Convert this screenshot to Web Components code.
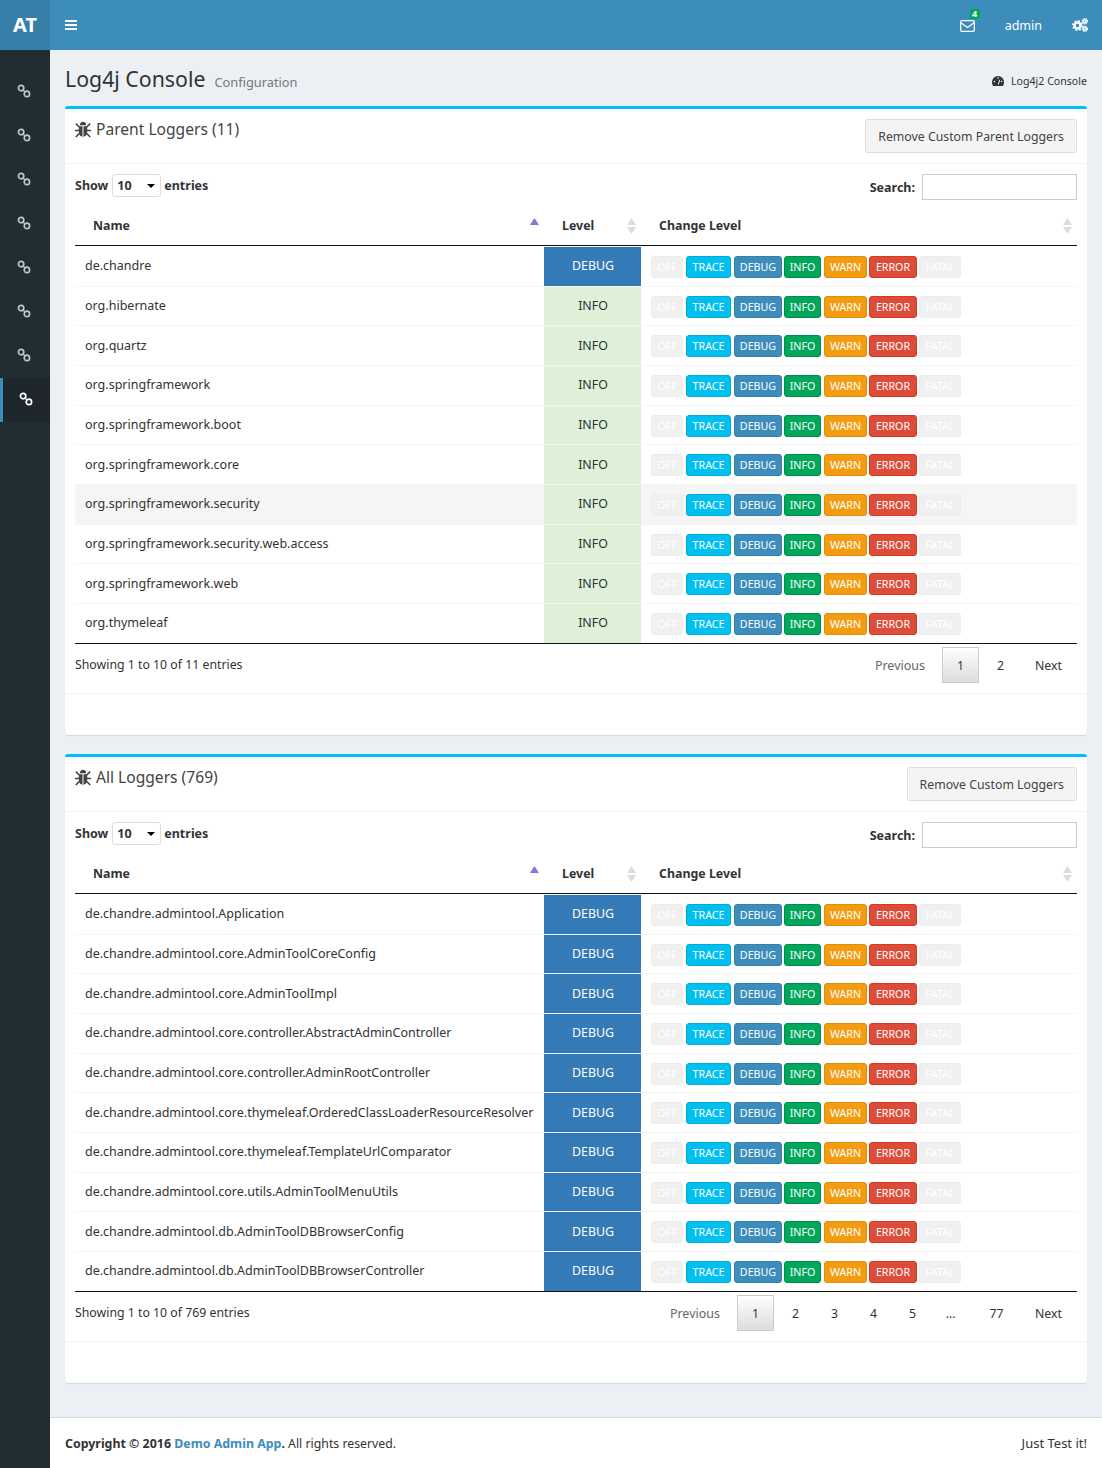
<!DOCTYPE html>
<html>
<head>
<meta charset="utf-8">
<title>Log4j Console</title>
<style>
  html, body { margin: 0; padding: 0; background: #ecf0f5; }
  body { font-family: "Noto Sans", "Liberation Sans", sans-serif; font-size: 12.3px; color: #333; }
</style>
</head>
<body>
<admin-layout>
  <log-box title-text="Parent Loggers (11)" action="Remove Custom Parent Loggers" info="Showing 1 to 10 of 11 entries" pages="1,2" source="parent"></log-box>
  <log-box title-text="All Loggers (769)" action="Remove Custom Loggers" info="Showing 1 to 10 of 769 entries" pages="1,2,3,4,5,…,77" source="all"></log-box>
</admin-layout>

<script>
// iconos compartidos
const ICONS = {
  link: '<svg width="14" height="14" viewBox="0 0 14 14" fill="none" stroke="currentColor" stroke-width="1.700"><circle cx="4.100" cy="4.100" r="2.700"/><circle cx="9.900" cy="9.900" r="2.700"/><path d="M5.500 5.500l3 3" stroke-width="1.200"/></svg>',
  bug: '<svg width="16" height="17" viewBox="0 0 16 17" fill="currentColor"><path d="M4.800 4.300C4.800 2 6.200.8 8 .8s3.200 1.200 3.200 3.500z"/><path d="M3.800 5.200h3.700v10.600C5.200 15.600 3.800 13.600 3.800 11zM8.500 5.200h3.700V11c0 2.600-1.400 4.600-3.700 4.800z"/><path d="M.8 2.600l3.400 3.400M15.200 2.600L11.800 6M0 9.500h4M16 9.500h-4M.8 16l3.400-3.400M15.200 16l-3.400-3.400" stroke="currentColor" stroke-width="1.500" fill="none"/></svg>',
  bars: '<svg width="12" height="10" viewBox="0 0 12 10" fill="currentColor"><rect width="12" height="2"/><rect y="4" width="12" height="2"/><rect y="8" width="12" height="2"/></svg>',
  mail: '<svg width="15" height="12" viewBox="0 0 15 12" fill="none" stroke="currentColor" stroke-width="1.300"><rect x=".7" y=".7" width="13.600" height="10.600" rx="1"/><path d="M1 2.800l6.500 4.700L14 2.800"/></svg>',
  gears: '<svg width="16" height="14" viewBox="0 0 16 14"><g fill="none" stroke="currentColor"><circle cx="5.500" cy="7.500" r="3" stroke-width="2.400"/><circle cx="5.500" cy="7.500" r="4.700" stroke-width="1.600" stroke-dasharray="1.800 1.900"/><circle cx="12.800" cy="3.200" r="1.500" stroke-width="1.500"/><circle cx="12.800" cy="3.200" r="2.700" stroke-width="1.200" stroke-dasharray="1.200 1.000"/><circle cx="12.800" cy="10.800" r="1.500" stroke-width="1.500"/><circle cx="12.800" cy="10.800" r="2.700" stroke-width="1.200" stroke-dasharray="1.200 1.000"/></g></svg>',
  gauge: '<svg width="12" height="10" viewBox="0 0 12 10" fill="currentColor"><path d="M6 0a6 6 0 0 1 6 6c0 1.600-.4 3-1.200 4H1.200C.4 9 0 7.600 0 6a6 6 0 0 1 6-6z"/><circle cx="6" cy="2" r=".8" fill="#ecf0f5"/><circle cx="2.400" cy="5.500" r=".8" fill="#ecf0f5"/><circle cx="9.600" cy="5.500" r=".8" fill="#ecf0f5"/><path d="M6.300 8.500L7.800 3.800" stroke="#ecf0f5" stroke-width="1"/></svg>'
};

// Botones de cambio de nivel
class LevelButtons extends HTMLElement {
  constructor() {
    super();
    this.attachShadow({ mode: 'open' });
    // nombre, fondo, borde, ancho, separación izquierda
    const levels = [
      ['OFF', '#f0f0f0', '#ececec', 32, 0], ['TRACE', '#00c0ef', '#00acd6', 45, 3], ['DEBUG', '#3c8dbc', '#367fa9', 48, 3],
      ['INFO', '#00a65a', '#008d4c', 37, 2], ['WARN', '#f39c12', '#e08e0b', 43, 3], ['ERROR', '#dd4b39', '#d73925', 48, 2], ['FATAL', '#f0f0f0', '#ececec', 42, 2]
    ];
    this.shadowRoot.innerHTML = `
      <style>
        :host { display: flex; }
        span { box-sizing: border-box; height: 22px; border: 1px solid; border-radius: 3px; color: #fff; font-size: 10.700px; line-height: 20px; text-align: center; }
      </style>
      ${levels.map(l => `<span style="width:${l[3]}px;margin-left:${l[4]}px;background:${l[1]};border-color:${l[2]}">${l[0]}</span>`).join('')}
    `;
  }
}

// Fila de la tabla de loggers
class LoggerRow extends HTMLElement {
  constructor() {
    super();
    this.attachShadow({ mode: 'open' });
    const level = this.getAttribute('level');
    this.shadowRoot.innerHTML = `
      <style>
        :host { display: grid; grid-template-columns: 469px 97px 1fr; height: 39.67px; box-sizing: border-box; border-top: 1px solid #f4f4f4; background: #fff; }
        :host(:first-child) { border-top-color: #fff; }
        :host([hover]) { background: #f5f5f5; }
        div { display: flex; align-items: center; padding-bottom: 1px; }
        .name { padding-left: 10px; white-space: nowrap; font-size: 12.520px; }
        .level { justify-content: center; padding-left: 1px; font-size: 12.400px; background: ${level === 'DEBUG' ? '#337ab7' : '#dff0d8'}; color: ${level === 'DEBUG' ? '#fff' : '#333'}; }
        .change { padding: 1.500px 0 0 10px; }
      </style>
      <div class="name"><slot></slot></div>
      <div class="level">${level}</div>
      <div class="change"><level-buttons></level-buttons></div>
    `;
  }
}

// Caja con tabla, cabecera y paginación
class LogBox extends HTMLElement {
  constructor() {
    super();
    this.attachShadow({ mode: 'open' });
  }
  connectedCallback() {
    const data = LOGGERS[this.getAttribute('source')];
    const pages = this.getAttribute('pages').split(',');
    const sort = (c1, c2) => `<svg width="9" height="16" viewBox="0 0 9 16"><path d="M4.500 0L9 7H0z" fill="${c1}"/><path d="M4.500 16L0 9h9z" fill="${c2}"/></svg>`;
    const pageClass = (p, i) => i === 0 ? 'cur' : p === '…' ? 'dots' : p.length > 1 ? 'wide' : '';
    this.shadowRoot.innerHTML = `
      <style>
        :host { display: block; height: 629px; box-sizing: border-box; background: #fff; border-top: 3px solid #00c0ef; border-radius: 3px; box-shadow: 0 1px 1px rgba(0,0,0,.1); margin-bottom: 19px; }
        .head { display: flex; justify-content: space-between; height: 55px; box-sizing: border-box; padding: 10px; border-bottom: 1px solid #f4f4f4; }
        h3 { margin: 0; font-size: 15.600px; font-weight: 400; line-height: 20px; color: #444; display: flex; gap: 5px; align-items: center; height: 20px; }
        button { font: inherit; color: #444; background: #f4f4f4; border: 1px solid #ddd; border-radius: 3px; height: 34px; padding: 0 12px; margin: 0; }
        .body { padding: 10px; }
        .controls { display: flex; justify-content: space-between; align-items: flex-start; height: 26px; font-weight: 700; font-size: 12.500px; }
        .len { display: flex; align-items: center; gap: 3px; height: 23px; }
        .select { box-sizing: border-box; width: 49px; height: 23px; margin-left: 1px; border: 1px solid #ddd; border-radius: 3px; display: flex; align-items: center; justify-content: space-between; padding: 0 5px 0 4px; }
        .select i { border: 4px solid transparent; border-top-color: #000; border-bottom: 0; }
        .search { display: flex; align-items: center; gap: 7px; }
        .search b { display: block; width: 155px; height: 26px; box-sizing: border-box; border: 1px solid #ccc; }
        .thead { display: grid; grid-template-columns: 469px 97px 1fr; height: 39px; margin-top: 6px; border-bottom: 1px solid #111; box-sizing: content-box; font-weight: 700; font-size: 12.400px; }
        .thead div { display: flex; align-items: center; justify-content: space-between; padding: 0 5px 0 18px; position: relative; }
        .rows { border-bottom: 1px solid #111; }
        .foot { display: flex; justify-content: space-between; align-items: flex-start; padding-top: 3px; height: 49px; box-sizing: border-box; }
        .info { padding-top: 9px; }
        .pager { display: flex; padding-top: 0; }
        .pager span { box-sizing: border-box; height: 36px; line-height: 36px; text-align: center; width: 39px; border: 1px solid transparent; }
        .pager .wide { width: 47px; }
        .pager .dots { width: 41px; padding-right: 4px; }
        .pager .off { color: #666; width: auto; padding: 0 16px 0 0; font-size: 12.500px; }
        .pager .cur { width: 37px; margin-right: 2px; background: linear-gradient(#fff, #dcdcdc); border-color: #ccc; }
        .pager .next { width: auto; padding: 0 14px; }
        .sep { border-top: 1px solid #f4f4f4; margin: 0 -10px; }
      </style>
      <div class="head">
        <h3>${ICONS.bug}<span>${this.getAttribute('title-text')}</span></h3>
        <button>${this.getAttribute('action')}</button>
      </div>
      <div class="body">
        <div class="controls">
          <div class="len">Show <span class="select">10 <i></i></span> entries</div>
          <div class="search">Search: <b></b></div>
        </div>
        <div class="thead">
          <div>Name ${sort('#7a7ad8', '#fff')}</div>
          <div>Level ${sort('#ddd', '#ddd')}</div>
          <div>Change Level ${sort('#ddd', '#ddd')}</div>
        </div>
        <div class="rows">${data.map(d => `<logger-row level="${d[1]}"${d[0] === 'org.springframework.security' ? ' hover' : ''}>${d[0]}</logger-row>`).join('')}</div>
        <div class="foot">
          <div class="info">${this.getAttribute('info')}</div>
          <div class="pager">
            <span class="off">Previous</span>
            ${pages.map((p, i) => `<span class="${pageClass(p, i)}">${p}</span>`).join('')}
            <span class="next">Next</span>
          </div>
        </div>
        <div class="sep"></div>
      </div>
    `;
  }
}

// Estructura general: cabecera, menú lateral, contenido y pie
class AdminLayout extends HTMLElement {
  constructor() {
    super();
    this.attachShadow({ mode: 'open' });
    const items = Array.from({ length: 8 }, (_, i) => `<a class="${i === 7 ? 'active' : ''}">${ICONS.link}</a>`).join('');
    this.shadowRoot.innerHTML = `
      <style>
        :host { display: grid; grid-template-columns: 50px 1fr; grid-template-rows: 50px 1fr; height: 1468px; }
        .logo { background: #367fa9; color: #fff; font: 700 20px/50px "Noto Sans", sans-serif; text-align: center; }
        header { background: #3c8dbc; color: #fff; display: flex; align-items: center; padding: 0 14px 0 15px; }
        header .right { margin-left: auto; display: flex; align-items: center; }
        .mail { position: relative; display: flex; margin-top: 1px; }
        .mail em { position: absolute; top: -11px; right: -5px; width: 10px; text-align: center; background: #00a65a; border-radius: 2px; font: 700 9px/10px "Noto Sans", sans-serif; }
        .user { margin: 0 30px; font-size: 12.500px; }
        aside { background: #222d32; padding-top: 20px; }
        aside a { display: flex; height: 44px; align-items: center; justify-content: center; color: #b8c7ce; box-sizing: border-box; padding: 0 2px 2px 0; }
        aside a.active { background: #1e282c; color: #fff; border-left: 3px solid #3c8dbc; }
        main { display: flex; flex-direction: column; min-width: 0; }
        .heading { display: flex; align-items: baseline; padding: 14px 15px 0; height: 56px; box-sizing: border-box; }
        h1 { margin: 0; font-size: 21.300px; font-weight: 400; line-height: 29px; }
        small { font-size: 12.800px; color: #777; margin-left: 9px; }
        .crumb { margin: 10px 0 0 auto; align-self: flex-start; font-size: 10.600px; display: flex; gap: 7px; align-items: center; }
        .content { padding: 0 15px; flex: 1; }
        footer { background: #fff; border-top: 1px solid #d2d6de; height: 51px; box-sizing: border-box; padding: 0 15px; display: flex; justify-content: space-between; align-items: center; }
        footer b { font-size: 12.400px; }
        footer b a { color: #3c8dbc; }
        .tag { font-size: 13px; }
      </style>
      <div class="logo">AT</div>
      <header>
        ${ICONS.bars}
        <div class="right">
          <span class="mail">${ICONS.mail}<em>4</em></span>
          <span class="user">admin</span>
          ${ICONS.gears}
        </div>
      </header>
      <aside>${items}</aside>
      <main>
        <div class="heading">
          <h1>Log4j Console</h1><small>Configuration</small>
          <span class="crumb">${ICONS.gauge} Log4j2 Console</span>
        </div>
        <div class="content"><slot></slot></div>
        <footer>
          <span><b>Copyright © 2016 <a>Demo Admin App</a>.</b> All rights reserved.</span>
          <span class="tag">Just Test it!</span>
        </footer>
      </main>
    `;
  }
}

const LOGGERS = {
  parent: [
    ['de.chandre', 'DEBUG'], ['org.hibernate', 'INFO'], ['org.quartz', 'INFO'], ['org.springframework', 'INFO'],
    ['org.springframework.boot', 'INFO'], ['org.springframework.core', 'INFO'], ['org.springframework.security', 'INFO'],
    ['org.springframework.security.web.access', 'INFO'], ['org.springframework.web', 'INFO'], ['org.thymeleaf', 'INFO']
  ],
  all: [
    'Application', 'core.AdminToolCoreConfig', 'core.AdminToolImpl', 'core.controller.AbstractAdminController',
    'core.controller.AdminRootController', 'core.thymeleaf.OrderedClassLoaderResourceResolver', 'core.thymeleaf.TemplateUrlComparator',
    'core.utils.AdminToolMenuUtils', 'db.AdminToolDBBrowserConfig', 'db.AdminToolDBBrowserController'
  ].map(n => ['de.chandre.admintool.' + n, 'DEBUG'])
};

customElements.define('level-buttons', LevelButtons);
customElements.define('logger-row', LoggerRow);
customElements.define('log-box', LogBox);
customElements.define('admin-layout', AdminLayout);
</script>
</body>
</html>
